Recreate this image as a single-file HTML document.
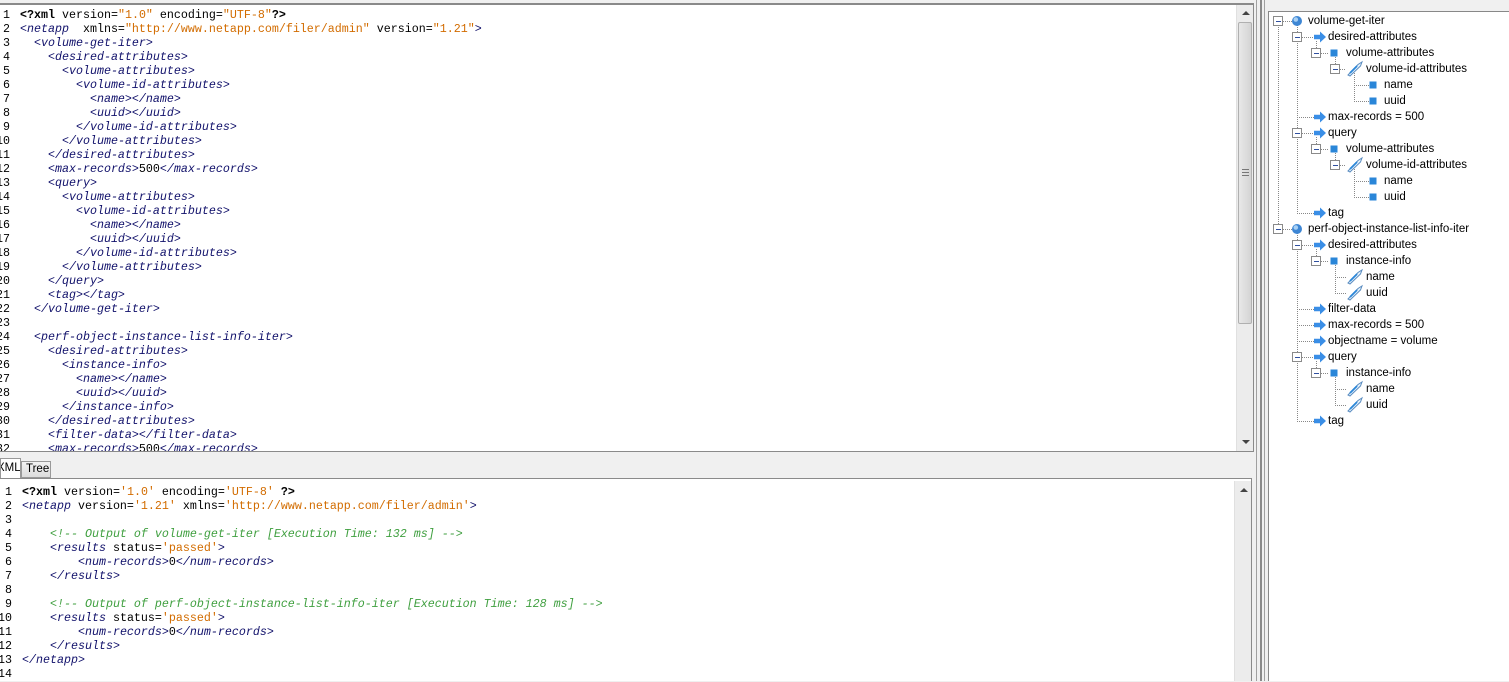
<!DOCTYPE html>
<html><head><meta charset="utf-8"><style>
*{margin:0;padding:0;box-sizing:border-box}
body{width:1509px;height:681px;overflow:hidden;background:#f0f0f0;position:relative;font-family:"Liberation Sans",sans-serif}
.ed{position:absolute;background:#fff;overflow:hidden}
.code{position:absolute;font-family:"Liberation Mono",monospace;font-size:11.67px;line-height:14px;white-space:pre;color:#000}
.num{position:absolute;font-family:"Liberation Mono",monospace;font-size:11.67px;line-height:14px;white-space:pre;text-align:right;color:#000}
.t{color:#10106a;font-style:italic}
.v{color:#d26c00}
.c{color:#3f9f3f;font-style:italic}
.b{font-weight:bold}
.sb{position:absolute;background:#ececec;border-left:1px solid #e0e0e0}
.tree{position:absolute;left:1268px;top:11px;width:241px;height:670px;background:#fff;border-left:1px solid #888;border-top:1px solid #888}
.row{position:absolute;font-size:11.5px;line-height:16px;color:#000;white-space:nowrap}
</style></head><body>

<div class="ed" style="left:0;top:3px;width:1254px;height:449px;border-top:2px solid #8a8a8a;border-right:1px solid #8a8a8a;border-bottom:1px solid #8a8a8a">
<div class="num" style="left:-14px;top:3px;width:24px">1
2
3
4
5
6
7
8
9
10
11
12
13
14
15
16
17
18
19
20
21
22
23
24
25
26
27
28
29
30
31
32</div>
<div class="code" style="left:20px;top:3px"><span class="b">&lt;?xml</span> version=<span class="v">"1.0"</span> encoding=<span class="v">"UTF-8"</span><span class="b">?&gt;</span>
<span class="t">&lt;netapp</span>  xmlns=<span class="v">"http://www.netapp.com/filer/admin"</span> version=<span class="v">"1.21"</span><span class="t">&gt;</span>
  <span class="t">&lt;volume-get-iter&gt;</span>
    <span class="t">&lt;desired-attributes&gt;</span>
      <span class="t">&lt;volume-attributes&gt;</span>
        <span class="t">&lt;volume-id-attributes&gt;</span>
          <span class="t">&lt;name&gt;&lt;/name&gt;</span>
          <span class="t">&lt;uuid&gt;&lt;/uuid&gt;</span>
        <span class="t">&lt;/volume-id-attributes&gt;</span>
      <span class="t">&lt;/volume-attributes&gt;</span>
    <span class="t">&lt;/desired-attributes&gt;</span>
    <span class="t">&lt;max-records&gt;</span>500<span class="t">&lt;/max-records&gt;</span>
    <span class="t">&lt;query&gt;</span>
      <span class="t">&lt;volume-attributes&gt;</span>
        <span class="t">&lt;volume-id-attributes&gt;</span>
          <span class="t">&lt;name&gt;&lt;/name&gt;</span>
          <span class="t">&lt;uuid&gt;&lt;/uuid&gt;</span>
        <span class="t">&lt;/volume-id-attributes&gt;</span>
      <span class="t">&lt;/volume-attributes&gt;</span>
    <span class="t">&lt;/query&gt;</span>
    <span class="t">&lt;tag&gt;&lt;/tag&gt;</span>
  <span class="t">&lt;/volume-get-iter&gt;</span>

  <span class="t">&lt;perf-object-instance-list-info-iter&gt;</span>
    <span class="t">&lt;desired-attributes&gt;</span>
      <span class="t">&lt;instance-info&gt;</span>
        <span class="t">&lt;name&gt;&lt;/name&gt;</span>
        <span class="t">&lt;uuid&gt;&lt;/uuid&gt;</span>
      <span class="t">&lt;/instance-info&gt;</span>
    <span class="t">&lt;/desired-attributes&gt;</span>
    <span class="t">&lt;filter-data&gt;&lt;/filter-data&gt;</span>
    <span class="t">&lt;max-records&gt;</span>500<span class="t">&lt;/max-records&gt;</span></div>
<div class="sb" style="left:1236px;top:0;width:17px;height:447px">
  <div style="position:absolute;left:5px;top:6px;border-left:4px solid transparent;border-right:4px solid transparent;border-bottom:4px solid #444"></div>
  <div style="position:absolute;left:1px;top:17px;width:14px;height:302px;background:linear-gradient(90deg,#e8e8e8,#d4d4d4);border:1px solid #b0b0b0;border-radius:2px"></div>
  <div style="position:absolute;left:5px;top:164px;width:7px;height:7px;border-top:1px solid #777;border-bottom:1px solid #777"><div style="margin-top:2px;border-top:1px solid #777"></div></div>
  <div style="position:absolute;left:5px;top:435px;border-left:4px solid transparent;border-right:4px solid transparent;border-top:4px solid #444"></div>
</div>
</div>

<div style="position:absolute;left:0;top:458px;width:21px;height:21px;background:#fff;border:1px solid #999;border-bottom:none;font-size:11.5px;line-height:18px;overflow:hidden"><span style="position:relative;left:-4px">XML</span></div>
<div style="position:absolute;left:21px;top:461px;width:30px;height:17px;background:linear-gradient(#f2f2f2,#dcdcdc);border:1px solid #999;font-size:11.5px;line-height:15px;padding-left:4px">Tree</div>

<div class="ed" style="left:0;top:478px;width:1252px;height:203px;border-top:1px solid #8a8a8a;border-right:1px solid #8a8a8a">
<div class="num" style="left:-6px;top:6px;width:18px">1
2
3
4
5
6
7
8
9
10
11
12
13
14</div>
<div class="code" style="left:22px;top:6px"><span class="b">&lt;?xml</span> version=<span class="v">'1.0'</span> encoding=<span class="v">'UTF-8'</span> <span class="b">?&gt;</span>
<span class="t">&lt;netapp</span> version=<span class="v">'1.21'</span> xmlns=<span class="v">'http://www.netapp.com/filer/admin'</span><span class="t">&gt;</span>

    <span class="c">&lt;!-- Output of volume-get-iter [Execution Time: 132 ms] --&gt;</span>
    <span class="t">&lt;results</span> status=<span class="v">'passed'</span><span class="t">&gt;</span>
        <span class="t">&lt;num-records&gt;</span>0<span class="t">&lt;/num-records&gt;</span>
    <span class="t">&lt;/results&gt;</span>

    <span class="c">&lt;!-- Output of perf-object-instance-list-info-iter [Execution Time: 128 ms] --&gt;</span>
    <span class="t">&lt;results</span> status=<span class="v">'passed'</span><span class="t">&gt;</span>
        <span class="t">&lt;num-records&gt;</span>0<span class="t">&lt;/num-records&gt;</span>
    <span class="t">&lt;/results&gt;</span>
<span class="t">&lt;/netapp&gt;</span>
</div>
<div class="sb" style="left:1234px;top:2px;width:17px;height:201px">
  <div style="position:absolute;left:5px;top:7px;border-left:4px solid transparent;border-right:4px solid transparent;border-bottom:4px solid #444"></div>
</div>
</div>

<div style="position:absolute;left:1256px;top:0;width:1px;height:681px;background:#a0a0a0"></div>
<div style="position:absolute;left:1260px;top:0;width:2px;height:681px;background:#8a8a8a"></div>
<div style="position:absolute;left:1264px;top:0;width:1px;height:681px;background:#a0a0a0"></div>

<div class="tree"></div>
<svg style="position:absolute;left:0;top:1px" width="1509" height="681">
<g stroke="#888" stroke-width="1" stroke-dasharray="1,1" fill="none" shape-rendering="crispEdges">
<line x1="1278.5" y1="20" x2="1278.5" y2="228"/>
<line x1="1297.5" y1="24" x2="1297.5" y2="212"/>
<line x1="1297.5" y1="232" x2="1297.5" y2="420"/>
<line x1="1316.5" y1="40" x2="1316.5" y2="52"/>
<line x1="1316.5" y1="136" x2="1316.5" y2="148"/>
<line x1="1316.5" y1="248" x2="1316.5" y2="260"/>
<line x1="1316.5" y1="360" x2="1316.5" y2="372"/>
<line x1="1335.5" y1="56" x2="1335.5" y2="68"/>
<line x1="1335.5" y1="152" x2="1335.5" y2="164"/>
<line x1="1335.5" y1="264" x2="1335.5" y2="292"/>
<line x1="1335.5" y1="376" x2="1335.5" y2="404"/>
<line x1="1354.5" y1="72" x2="1354.5" y2="100"/>
<line x1="1354.5" y1="168" x2="1354.5" y2="196"/>
<path d="M1283 20.5H1292M1283 228.5H1292"/>
<path d="M1302 36.5H1314M1302 132.5H1314M1302 244.5H1314M1302 356.5H1314"/>
<path d="M1297 116.5H1314M1297 212.5H1314M1297 308.5H1314M1297 324.5H1314M1297 340.5H1314M1297 420.5H1314"/>
<path d="M1321 52.5H1329M1321 148.5H1329M1321 260.5H1329M1321 372.5H1329"/>
<path d="M1340 68.5H1346M1340 164.5H1346"/>
<path d="M1335 276.5H1346M1335 292.5H1346M1335 388.5H1346M1335 404.5H1346"/>
<path d="M1354 84.5H1369M1354 100.5H1369M1354 180.5H1369M1354 196.5H1369"/>
</g>
<defs>
<g id="box"><rect x="-4.5" y="-4.5" width="9" height="9" fill="#fff" stroke="#8a8a8a"/><path d="M-2 0.5H3" stroke="#3050a0"/></g>
<g id="globe"><circle cx="0" cy="0" r="5" fill="#3d86d4"/><circle cx="-1.2" cy="-1.5" r="2.3" fill="#a8d0f4"/></g>
<g id="arrow"><path d="M-6 -2.2H0V-5.5L6 0L0 5.5V2.2H-6Z" fill="#3a8ee6"/></g>
<g id="sq"><rect x="-3.5" y="-3.5" width="7" height="7" fill="#2a86d8"/></g>
<g id="tag"><path d="M-7 6L3 -4.5L7 -7L5.5 -3L-5 7Z" fill="#e4f1fc" stroke="#5a8cc0"/><path d="M-5 4L2 -3" stroke="#2a86d8" stroke-width="1.8"/></g>
</defs>
<use href="#box" x="1278" y="20"/><use href="#globe" x="1297" y="20"/>
<use href="#box" x="1297" y="36"/><use href="#arrow" x="1320" y="36"/>
<use href="#box" x="1316" y="52"/><use href="#sq" x="1334" y="52"/>
<use href="#box" x="1335" y="68"/><use href="#tag" x="1355" y="68"/>
<use href="#sq" x="1373" y="84"/><use href="#sq" x="1373" y="100"/>
<use href="#arrow" x="1320" y="116"/>
<use href="#box" x="1297" y="132"/><use href="#arrow" x="1320" y="132"/>
<use href="#box" x="1316" y="148"/><use href="#sq" x="1334" y="148"/>
<use href="#box" x="1335" y="164"/><use href="#tag" x="1355" y="164"/>
<use href="#sq" x="1373" y="180"/><use href="#sq" x="1373" y="196"/>
<use href="#arrow" x="1320" y="212"/>
<use href="#box" x="1278" y="228"/><use href="#globe" x="1297" y="228"/>
<use href="#box" x="1297" y="244"/><use href="#arrow" x="1320" y="244"/>
<use href="#box" x="1316" y="260"/><use href="#sq" x="1334" y="260"/>
<use href="#tag" x="1355" y="276"/><use href="#tag" x="1355" y="292"/>
<use href="#arrow" x="1320" y="308"/><use href="#arrow" x="1320" y="324"/><use href="#arrow" x="1320" y="340"/>
<use href="#box" x="1297" y="356"/><use href="#arrow" x="1320" y="356"/>
<use href="#box" x="1316" y="372"/><use href="#sq" x="1334" y="372"/>
<use href="#tag" x="1355" y="388"/><use href="#tag" x="1355" y="404"/>
<use href="#arrow" x="1320" y="420"/>
</svg>
<div class="row" style="left:1308px;top:13px">volume-get-iter</div>
<div class="row" style="left:1328px;top:29px">desired-attributes</div>
<div class="row" style="left:1346px;top:45px">volume-attributes</div>
<div class="row" style="left:1366px;top:61px">volume-id-attributes</div>
<div class="row" style="left:1384px;top:77px">name</div>
<div class="row" style="left:1384px;top:93px">uuid</div>
<div class="row" style="left:1328px;top:109px">max-records = 500</div>
<div class="row" style="left:1328px;top:125px">query</div>
<div class="row" style="left:1346px;top:141px">volume-attributes</div>
<div class="row" style="left:1366px;top:157px">volume-id-attributes</div>
<div class="row" style="left:1384px;top:173px">name</div>
<div class="row" style="left:1384px;top:189px">uuid</div>
<div class="row" style="left:1328px;top:205px">tag</div>
<div class="row" style="left:1308px;top:221px">perf-object-instance-list-info-iter</div>
<div class="row" style="left:1328px;top:237px">desired-attributes</div>
<div class="row" style="left:1346px;top:253px">instance-info</div>
<div class="row" style="left:1366px;top:269px">name</div>
<div class="row" style="left:1366px;top:285px">uuid</div>
<div class="row" style="left:1328px;top:301px">filter-data</div>
<div class="row" style="left:1328px;top:317px">max-records = 500</div>
<div class="row" style="left:1328px;top:333px">objectname = volume</div>
<div class="row" style="left:1328px;top:349px">query</div>
<div class="row" style="left:1346px;top:365px">instance-info</div>
<div class="row" style="left:1366px;top:381px">name</div>
<div class="row" style="left:1366px;top:397px">uuid</div>
<div class="row" style="left:1328px;top:413px">tag</div>
</body></html>
